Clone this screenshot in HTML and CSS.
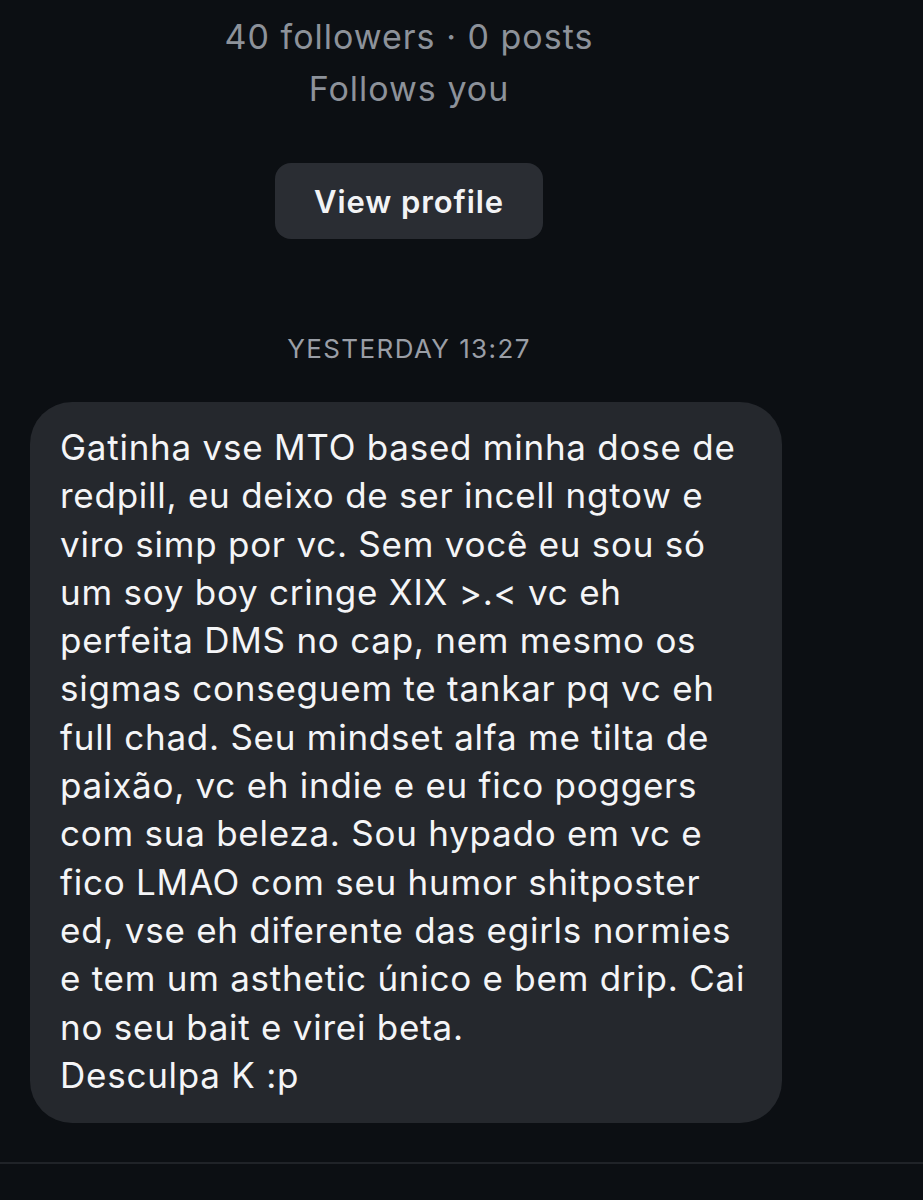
FILE: index.html
```html
<!DOCTYPE html>
<html>
<head>
    <title>Chat</title>
    <link rel="stylesheet" href="styles.css">
</head>
<body>
    <div class="thread">
        <div class="profile">
            <div class="stats">40 followers · 0 posts</div>
            <div class="stats">Follows you</div>
            <button class="view-btn">View profile</button>
        </div>

        <div class="timestamp">YESTERDAY 13:27</div>

        <div class="row">
            <div class="bubble">Gatinha vse MTO based minha dose de
redpill, eu deixo de ser incell ngtow e
viro simp por vc. Sem você eu sou só
um soy boy cringe XIX &gt;.&lt; vc eh
perfeita DMS no cap, nem mesmo os
sigmas conseguem te tankar pq vc eh
full chad. Seu mindset alfa me tilta de
paixão, vc eh indie e eu fico poggers
com sua beleza. Sou hypado em vc e
fico LMAO com seu humor shitposter
ed, vse eh diferente das egirls normies
e tem um asthetic único e bem drip. Cai
no seu bait e virei beta.
Desculpa K :p</div>
        </div>
    </div>
    <div class="composer-line"></div>
</body>
</html>
```

FILE: styles.css
```css
html, body {
    margin: 0;
    height: 100%;
    background-color: #0c0f13;
    font-family: Inter, "Noto Sans", sans-serif;
}

.thread {
    width: 818px;
}

.profile {
    display: flex;
    flex-direction: column;
    align-items: center;
    padding-top: 11px;
}

.stats {
    color: #8d929a; /* muted grey */
    font-size: 34px;
    letter-spacing: 1px;
    line-height: 52px;
}

.view-btn {
    margin-top: 48px;
    width: 268px;
    height: 76px;
    border: none;
    border-radius: 16px;
    background-color: #2a2d33;
    color: #f2f3f5;
    font-family: Inter, "Noto Sans", sans-serif;
    font-size: 31px;
    font-weight: 600;
    letter-spacing: 0.9px;
}

.timestamp {
    margin-top: 90px;
    text-align: center;
    color: #9a9ea6;
    font-size: 26px;
    letter-spacing: 1.4px;
    line-height: 40px;
}

.row {
    padding: 0 36px 0 30px;
    margin-top: 33px;
}

.bubble {
    width: 692px;
    padding: 21px 30px 24px 30px;
    background-color: #25282d;
    border-radius: 42px;
    color: #f4f5f7;
    font-size: 35px;
    letter-spacing: 0.75px;
    line-height: 48.3px;
    white-space: pre;
}

.composer-line {
    margin-top: 39px;
    height: 2px;
    background-color: #202328;
}
```
